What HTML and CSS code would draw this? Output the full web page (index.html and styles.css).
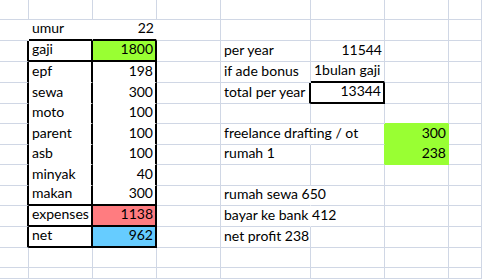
FILE: index.html
```html
<!DOCTYPE html>
<html>
<head>
<meta charset="utf-8">
<link rel="stylesheet" href="styles.css">
</head>
<body>
<div class="sheet">
  <!-- row 0 -->
  <div class="c"></div><div class="c"></div><div class="c"></div><div class="c"></div><div class="c"></div><div class="c"></div><div class="c"></div><div class="c"></div>
  <!-- row 1 -->
  <div class="c nr"></div><div class="c nr tb">umur</div><div class="c num nr tb">22</div><div class="c"></div><div class="c"></div><div class="c"></div><div class="c"></div><div class="c"></div>
  <!-- row 2 -->
  <div class="c tr"></div><div class="c tr tb">gaji</div><div class="c num tr tb green">1800</div><div class="c"></div><div class="c">per year</div><div class="c num">11544</div><div class="c"></div><div class="c"></div>
  <!-- row 3 -->
  <div class="c tr"></div><div class="c tr nb">epf</div><div class="c num tr nb">198</div><div class="c"></div><div class="c">if ade bonus</div><div class="c tb">1bulan gaji</div><div class="c"></div><div class="c"></div>
  <!-- row 4 -->
  <div class="c tr"></div><div class="c tr nb">sewa</div><div class="c num tr nb">300</div><div class="c"></div><div class="c tr">total per year</div><div class="c num tr tb">13344</div><div class="c"></div><div class="c"></div>
  <!-- row 5 -->
  <div class="c tr"></div><div class="c tr nb">moto</div><div class="c num tr nb">100</div><div class="c"></div><div class="c"></div><div class="c"></div><div class="c gb"></div><div class="c"></div>
  <!-- row 6 -->
  <div class="c tr"></div><div class="c tr nb">parent</div><div class="c num tr nb">100</div><div class="c"></div><div class="c nr">freelance drafting / ot</div><div class="c gr"></div><div class="c num green gr gb">300</div><div class="c"></div>
  <!-- row 7 -->
  <div class="c tr"></div><div class="c tr nb">asb</div><div class="c num tr nb">100</div><div class="c"></div><div class="c">rumah 1</div><div class="c gr"></div><div class="c num green gr gb">238</div><div class="c"></div>
  <!-- row 8 -->
  <div class="c tr"></div><div class="c tr nb">minyak</div><div class="c num tr nb">40</div><div class="c"></div><div class="c"></div><div class="c"></div><div class="c"></div><div class="c"></div>
  <!-- row 9 -->
  <div class="c tr"></div><div class="c tr tb">makan</div><div class="c num tr tb">300</div><div class="c"></div><div class="c nr">rumah sewa 650</div><div class="c"></div><div class="c"></div><div class="c"></div>
  <!-- row 10 -->
  <div class="c tr"></div><div class="c tr tb">expenses</div><div class="c num tr tb red">1138</div><div class="c"></div><div class="c nr">bayar ke bank 412</div><div class="c"></div><div class="c"></div><div class="c"></div>
  <!-- row 11 -->
  <div class="c tr"></div><div class="c tr tb">net</div><div class="c num tr tb blue">962</div><div class="c"></div><div class="c">net profit 238</div><div class="c"></div><div class="c"></div><div class="c"></div>
  <!-- row 12 -->
  <div class="c"></div><div class="c"></div><div class="c"></div><div class="c"></div><div class="c"></div><div class="c"></div><div class="c"></div><div class="c"></div>
  <!-- row 13 -->
  <div class="c"></div><div class="c"></div><div class="c"></div><div class="c"></div><div class="c"></div><div class="c"></div><div class="c"></div><div class="c"></div>
</div>
</body>
</html>
```
FILE: styles.css
```css
html, body {
  margin: 0;
  padding: 0;
  background: #ffffff;
  overflow: hidden;
}

.sheet {
  width: 482px;
  height: 279px;
  display: grid;
  grid-template-columns: 29px 64px 64px 64px 90px 74px 64px 1fr;
  grid-template-rows: 20px 21px 21px 21px 21px 20px 21px 20px 21px 20px 21px 21px 20px 1fr;
  font-family: Lato, "Liberation Sans", sans-serif;
  font-size: 14px;
  color: #000000;
}

.c {
  box-sizing: border-box;
  display: flex;
  align-items: flex-end;
  justify-content: flex-start;
  padding: 0 2px 2px 3px;
  line-height: 18px;
  white-space: nowrap;
  overflow: visible;
  border-right: 1px solid #d0d7e5;
  border-bottom: 1px solid #d0d7e5;
}

.num {
  justify-content: flex-end;
}

.nr {
  border-right-color: transparent;
}

.nb {
  border-bottom-color: transparent;
}

.tr {
  border-right: 2px solid #000000;
}

.tb {
  border-bottom: 2px solid #000000;
}

.green {
  background: #99ff33;
}

.red {
  background: #ff7c80;
}

.blue {
  background: #66ccff;
}

.gr {
  border-right-color: #99ff33;
}

.gb {
  border-bottom-color: #99ff33;
}
```
